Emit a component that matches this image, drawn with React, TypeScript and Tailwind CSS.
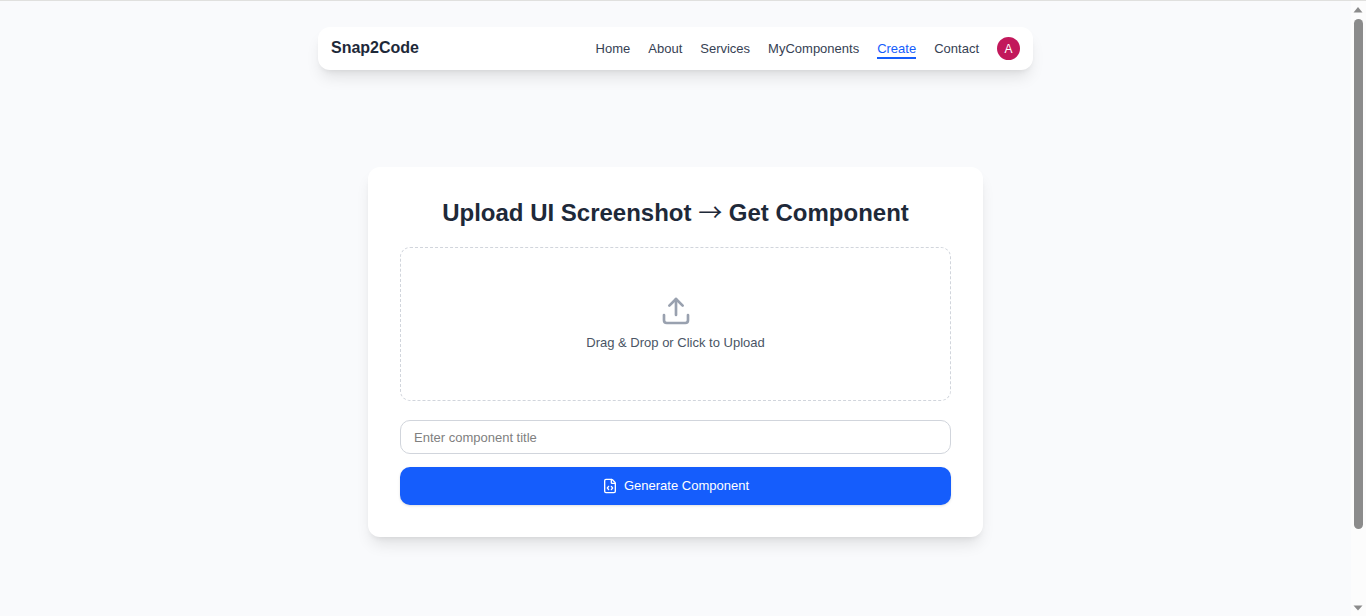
import React, { useState } from 'react';
import { Upload, FileCode } from 'lucide-react';
import clsx from 'clsx';

const links = ['Home', 'About', 'Services', 'MyComponents', 'Create', 'Contact'];

const Navbar: React.FC<{ active: string }> = ({ active }) => (
  <nav className="w-full max-w-[715px] h-[43px] mx-auto px-[13px] flex items-center justify-between bg-white rounded-xl shadow-lg">
    <a href="#home" className="text-base font-bold leading-5 text-gray-800 pb-0.5">Snap2Code</a>
    <div className="flex items-center gap-[18px]">
      {links.map(link => (
        <a
          key={link}
          href={`#${link.toLowerCase()}`}
          className={clsx(
            'text-[13px] leading-4 border-b-2 pt-0.5',
            link === active ? 'text-blue-600 border-blue-600' : 'text-gray-700 border-transparent'
          )}
        >
          {link}
        </a>
      ))}
      <button className="w-[23px] h-[23px] rounded-full bg-[#c2185b] text-white text-xs flex items-center justify-center">A</button>
    </div>
  </nav>
);

const UploadCard: React.FC = () => {
  const [title, setTitle] = useState('');

  return (
    <form
      onSubmit={e => e.preventDefault()}
      className="w-full max-w-[615px] mx-auto p-8 bg-white rounded-xl shadow-lg"
    >
      <h1 className="text-2xl leading-7 font-bold text-center text-gray-800 mb-5">
        Upload UI Screenshot <span className="font-normal font-['Noto_Sans_CJK_SC',sans-serif] leading-none">→</span> Get Component
      </h1>

      <label className="flex flex-col items-center gap-1.5 py-[47px] border border-dashed border-gray-300 rounded-[10px] cursor-pointer">
        <Upload className="w-8 h-8 text-gray-400" />
        <span className="text-[13px] leading-5 text-gray-600">Drag &amp; Drop or Click to Upload</span>
        <input type="file" accept="image/*" className="sr-only" />
      </label>

      <input
        type="text"
        aria-label="Component title"
        placeholder="Enter component title"
        value={title}
        onChange={e => setTitle(e.target.value)}
        className="block w-full h-[34px] mt-[19px] px-[13px] text-[13px] text-gray-800 placeholder:text-[#808080] border border-gray-300 rounded-[10px]"
      />

      <button
        type="submit"
        className="w-full h-[38px] mt-[13px] flex items-center justify-center gap-1.5 bg-[#155dfc] text-white text-[13px] font-medium rounded-[10px] shadow-sm"
      >
        <FileCode className="w-4 h-4" />
        Generate Component
      </button>
    </form>
  );
};

// Scroll rail on the right edge of the window
const ScrollRail: React.FC = () => (
  <div aria-hidden="true" className="w-[15px] shrink-0 pr-px pt-[6px] pb-[5px] flex flex-col items-center bg-[#fcfcfc]">
    <svg width="10" height="6" viewBox="0 0 10 6" fill="#8b8b8b"><path d="M5 0 9.500 5.500H.5z" /></svg>
    <div className="grow w-full py-[6px] flex flex-col items-center">
      <div className="h-[88%] w-[9px] rounded-full bg-[#8b8b8b]" />
    </div>
    <svg width="10" height="6" viewBox="0 0 10 6" fill="#8b8b8b"><path d="M5 5.500.5.500h9z" /></svg>
  </div>
);

export default function App() {
  return (
    <div className="min-h-screen flex flex-col border-t border-[#e0e0de] bg-[#f9fafc] font-['Liberation_Sans',Arial,sans-serif]">
      <div className="grow flex">
        <div className="grow pt-[26px] pb-16">
          <Navbar active="Create" />
          <main className="pt-[97px]">
            <UploadCard />
          </main>
        </div>
        <ScrollRail />
      </div>
    </div>
  );
}
